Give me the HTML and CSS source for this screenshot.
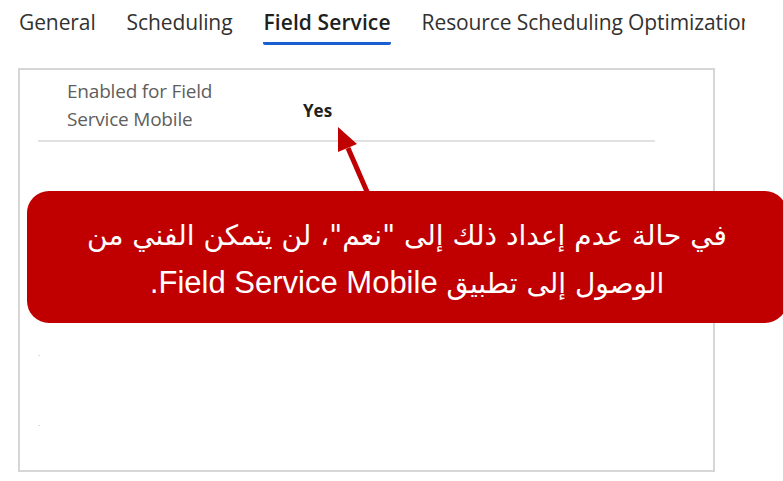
FILE: index.html
```html
<!DOCTYPE html>
<html lang="en">
<head>
<meta charset="utf-8">
<link rel="stylesheet" href="styles.css">
</head>
<body>
<div class="page">
  <nav class="tabs">
    <span class="tab">General</span>
    <span class="tab">Scheduling</span>
    <span class="tab active">Field Service</span>
    <span class="tab">Resource Scheduling Optimization</span>
  </nav>
  <section class="card">
    <div class="field">
      <div class="label">Enabled for Field<br>Service Mobile</div>
      <div class="value">Yes</div>
    </div>
    <div class="divider"></div>
    <div class="dot dot1"></div>
    <div class="dot dot2"></div>
  </section>

  <svg class="arrow" width="783" height="481" viewBox="0 0 783 481">
    <line x1="368" y1="194" x2="348" y2="148" stroke="#c00000" stroke-width="5"/>
    <polygon points="338,127 357,144 338,152" fill="#c00000"/>
  </svg>

  <div class="callout" dir="rtl">
    <p>في حالة عدم إعداد ذلك إلى "نعم"، لن يتمكن الفني من<br>الوصول إلى تطبيق <span class="latin">Field Service Mobile</span>.</p>
  </div>
</div>
</body>
</html>
```

FILE: styles.css
```css
* { box-sizing: border-box; }
html, body { margin: 0; padding: 0; background: #fff; }
body { font-family: "Open Sans", "Noto Sans", sans-serif; color: #323130; }
.page { position: relative; width: 783px; height: 481px; overflow: hidden; }

.tabs {
  display: flex;
  gap: 31px;
  padding: 7px 0 0 19px;
  width: 745px;
  height: 46px;
  white-space: nowrap;
  overflow: hidden;
}
.tab {
  font-size: 21px;
  line-height: 30px;
  height: 38px;
  color: #323130;
  flex-shrink: 0;
  letter-spacing: -0.1px;
}
.tab.active {
  font-weight: 600;
  color: #201f1e;
  border-bottom: 3px solid #1a5fd0;
  border-radius: 0 0 2px 2px;
  letter-spacing: 0.1px;
}

.card {
  margin: 22px 0 0 18px;
  width: 697px;
  height: 404px;
  border: 2px solid #d6d6d6;
  position: relative;
  padding: 0 0 0 18px;
}
.field {
  display: flex;
  align-items: center;
  padding-left: 29px;
  height: 70px;
}
.label {
  width: 236px;
  font-size: 19px;
  line-height: 28px;
  color: #605e5c;
  letter-spacing: -0.2px;
}
.value {
  font-size: 17px;
  font-weight: 700;
  color: #201f1e;
  margin-top: 10px;
}
.divider {
  width: 617px;
  height: 2px;
  background: #e1e1e1;
}
.dot { position: absolute; left: 18px; width: 2px; height: 1px; background: #ddd; }
.dot1 { top: 285px; }
.dot2 { top: 355px; }

.arrow { position: absolute; left: 0; top: 0; pointer-events: none; }

.callout {
  position: absolute;
  left: 27px;
  top: 191px;
  width: 760px;
  height: 132px;
  background: #c00000;
  border-radius: 22px;
  display: flex;
  align-items: center;
  justify-content: center;
  padding: 4px 30px 0 30px;
}
.callout p {
  margin: 0;
  color: #fff;
  font-family: "DejaVu Sans", "Noto Sans", sans-serif;
  font-size: 28px;
  line-height: 47px;
  text-align: center;
  white-space: nowrap;
}
.callout .latin {
  font-family: "Liberation Sans", sans-serif;
  font-size: 31px;
}
```
